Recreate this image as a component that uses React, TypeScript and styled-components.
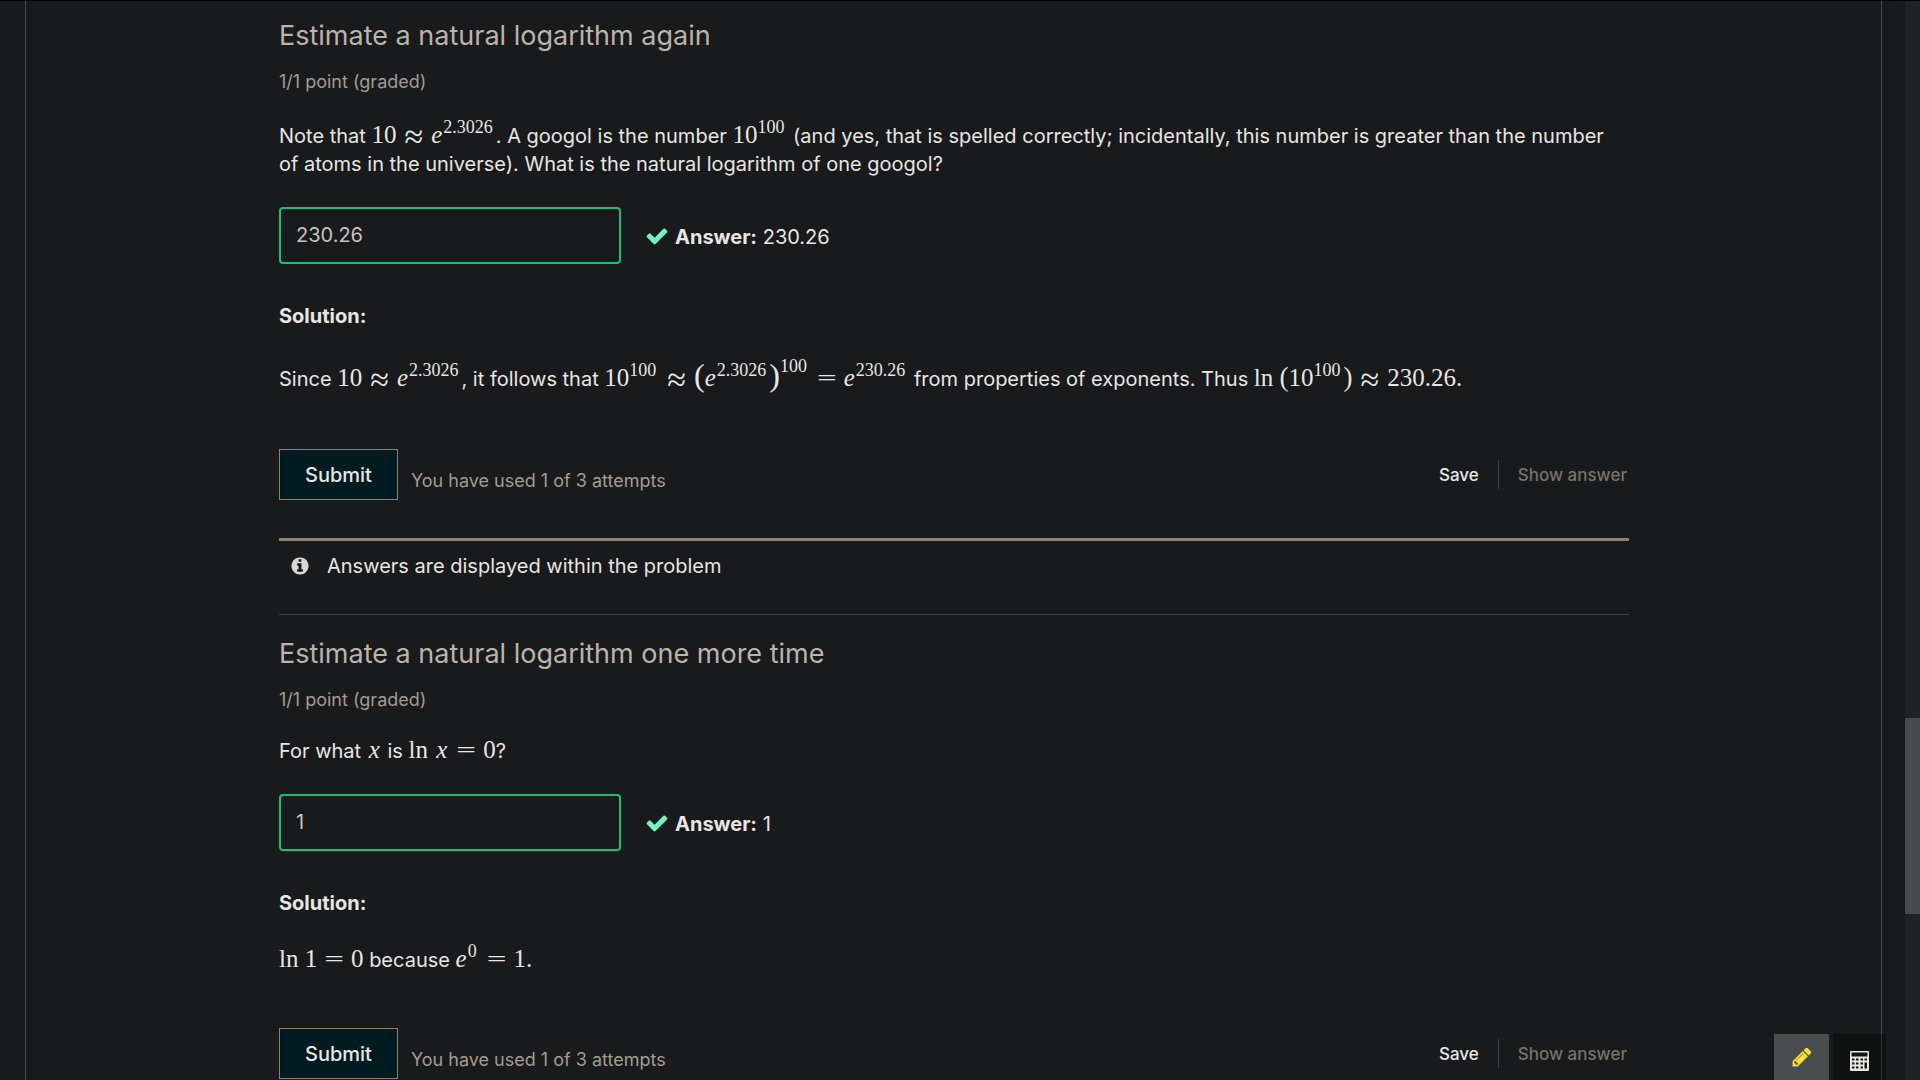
import React, { useState } from 'react';
import styled, { createGlobalStyle } from 'styled-components';

const color = {
  page: '#181a1b',
  text: '#e8e6e3',
  heading: '#bab4ab',
  muted: '#a49c91',
  field: '#c8c3bc',
  line: '#3e4446',
  rule: '#8c8172',
};

const GlobalStyle = createGlobalStyle`
  * { box-sizing: border-box; }
  body {
    margin: 0;
    background: ${color.page};
    color: ${color.text};
    font: 400 20px/28px Inter, "Open Sans", sans-serif;
  }
  button, input { font-family: inherit; }
`;

const Viewport = styled.div`
  display: flex;
  height: 100vh;
  overflow: hidden;
  border-top: 1px solid #000;
`;

const Content = styled.main`
  flex: 1;
  min-width: 0;
  margin: 0 23px 0 25px;
  padding: 0 252px 0 253px;
  border: solid #4c4f50;
  border-width: 0 1px;
`;

const ScrollTrack = styled.div`
  display: flex;
  flex-direction: column;
  width: 15px;
  background: #1f2324;
`;

const ScrollGap = styled.div<{ $grow: number }>`
  flex: ${(p) => p.$grow} 0 0;
`;

const ScrollThumb = styled.div`
  flex: 196 0 0;
  background: #454a4d;
`;

const Problem = styled.section<{ $divided?: boolean }>`
  padding-top: ${(p) => (p.$divided ? '20px' : '16px')};
  ${(p) => p.$divided && `border-top: 1px solid ${color.line};`}
`;

const Title = styled.h3`
  margin: 0;
  color: ${color.heading};
  font-size: 27px;
  font-weight: 400;
  line-height: 38px;
`;

const Progress = styled.div`
  margin-top: 14px;
  color: ${color.muted};
  font-size: 18px;
  line-height: 26px;
`;

const Prompt = styled.p<{ $tall?: boolean }>`
  margin: ${(p) => (p.$tall ? '27px' : '24px')} 0 0;
  padding-right: 10px;
`;

const AnswerRow = styled.div`
  display: flex;
  align-items: center;
  margin-top: 29px;
`;

const Field = styled.input`
  width: 342px;
  height: 57px;
  padding: 0 15px 2px;
  border: 2px solid #15c177;
  border-radius: 4px;
  background: ${color.page};
  color: ${color.field};
  font-size: 20px;
  outline: none;
`;

const CheckIcon = styled.svg`
  width: 24px;
  height: 24px;
  margin: 0 6px 0 24px;
  fill: #71f4bc;
`;

const Answer = styled.span`
  padding-top: 3px;
`;

const SolutionLabel = styled.p`
  margin: 38px 0 0;
  font-weight: 700;
`;

const Explanation = styled.p<{ $tall?: boolean }>`
  margin: ${(p) => (p.$tall ? '35px 0 56px' : '29px 0 54px')};
`;

const Actions = styled.div`
  display: flex;
  align-items: center;
`;

const Submit = styled.button`
  height: 51px;
  padding: 0 25px;
  border: 1px solid ${color.rule};
  background: #001c20;
  color: ${color.text};
  font-size: 20px;
  font-weight: 500;
`;

const Attempts = styled.span`
  flex: 1;
  padding: 12px 0 0 13px;
  color: ${color.muted};
  font-size: 18px;
`;

const LinkButton = styled.button`
  padding: 0 2px;
  border: 0;
  background: transparent;
  color: ${color.text};
  font-size: 17px;
  font-weight: 500;
  line-height: 28px;
  &:disabled { color: #77736c; }
`;

const Separator = styled.span`
  width: 1px;
  height: 29px;
  margin: 0 17px;
  background: ${color.line};
`;

const Notification = styled.div`
  display: flex;
  align-items: center;
  gap: 17px;
  margin-top: 38px;
  padding: 11px 11px 34px;
  border-top: 3px solid ${color.rule};
`;

const InfoIcon = styled.svg`
  width: 20px;
  height: 20px;
  fill: #dcd9d4;
`;

const Math = styled.span`
  font: 25px/1px "Liberation Serif", serif;
  white-space: nowrap;
`;

const Var = styled.i<{ $wide?: boolean }>`
  padding: ${(p) => (p.$wide ? '0 2px' : '0 1px 0 0')};
`;

const Sup = styled.sup<{ $high?: boolean }>`
  position: relative;
  top: ${(p) => (p.$high ? '-14px' : '-10px')};
  font-size: 18px;
  line-height: 1px;
  vertical-align: baseline;
  padding-right: 3px;
`;

const Rel = styled.span`
  margin: 0 6px;
  font: 200 26px/1px "DejaVu Sans", sans-serif;
`;

const Approx = styled.span`
  margin: 0 8px;
  font-size: 34px;
  line-height: 1px;
  vertical-align: -5px;
`;

const Fence = styled.span<{ $big?: boolean }>`
  font-size: ${(p) => (p.$big ? '32px' : '27px')};
  line-height: 1px;
`;

const Tools = styled.div`
  position: fixed;
  right: 34px;
  bottom: 0;
  display: flex;
  gap: 4px;
`;

const Tool = styled.button<{ $active?: boolean }>`
  display: flex;
  align-items: center;
  justify-content: center;
  width: ${(p) => (p.$active ? '55px' : '53px')};
  height: 46px;
  padding: ${(p) => (p.$active ? '0' : '8px 0 0')};
  border: 0;
  background: ${(p) => (p.$active ? '#484d50' : 'rgba(0, 0, 0, 0.3)')};
`;

const CheckMark = () => (
  <CheckIcon viewBox="0 0 1792 1792" role="img" aria-label="correct">
    <path d="M1671 566q0 40-28 68l-724 724-136 136q-28 28-68 28t-68-28l-136-136-362-362q-28-28-28-68t28-68l136-136q28-28 68-28t68 28l294 295 656-657q28-28 68-28t68 28l136 136q28 28 28 68z" />
  </CheckIcon>
);

type ProblemProps = {
  id: string;
  title: string;
  answer: string;
  prompt: React.ReactNode;
  explanation: React.ReactNode;
  divided?: boolean;
  tall?: boolean;
};

function ProblemBlock({ id, title, answer, prompt, explanation, divided, tall }: ProblemProps) {
  const [value, setValue] = useState(answer);
  return (
    <Problem $divided={divided}>
      <Title>{title}</Title>
      <Progress>1/1 point (graded)</Progress>
      <Prompt id={`${id}-prompt`} $tall={tall}>{prompt}</Prompt>
      <AnswerRow>
        <Field
          type="text"
          aria-labelledby={`${id}-prompt`}
          value={value}
          onChange={(e) => setValue(e.target.value)}
        />
        <CheckMark />
        <Answer>
          <b>Answer:</b> {answer}
        </Answer>
      </AnswerRow>
      <SolutionLabel>Solution:</SolutionLabel>
      <Explanation $tall={tall}>{explanation}</Explanation>
      <Actions>
        <Submit type="button">Submit</Submit>
        <Attempts>You have used 1 of 3 attempts</Attempts>
        <LinkButton type="button">Save</LinkButton>
        <Separator />
        <LinkButton type="button" disabled>
          Show answer
        </LinkButton>
      </Actions>
    </Problem>
  );
}

export default function App() {
  return (
    <>
      <GlobalStyle />
      <Viewport>
        <Content>
          <ProblemBlock
            id="googol"
            title="Estimate a natural logarithm again"
            answer="230.26"
            tall
            prompt={
              <>
                Note that{' '}
                <Math>10<Approx>≈</Approx><Var>e</Var><Sup>2.3026</Sup></Math>
                . A googol is the number <Math>10<Sup>100</Sup></Math> (and yes, that is spelled
                correctly; incidentally, this number is greater than the number of atoms in the
                universe). What is the natural logarithm of one googol?
              </>
            }
            explanation={
              <>
                Since <Math>10<Approx>≈</Approx><Var>e</Var><Sup>2.3026</Sup></Math>, it follows that{' '}
                <Math>
                  10<Sup>100</Sup><Approx>≈</Approx><Fence $big>(</Fence><Var>e</Var><Sup>2.3026</Sup>
                  <Fence $big>)</Fence><Sup $high>100</Sup><Rel>=</Rel><Var>e</Var><Sup>230.26</Sup>
                </Math>{' '}
                from properties of exponents. Thus{' '}
                <Math>
                  ln <Fence>(</Fence>10<Sup>100</Sup><Fence>)</Fence><Approx>≈</Approx>230.26.
                </Math>
              </>
            }
          />
          <Notification>
            <InfoIcon viewBox="0 0 1792 1792" aria-hidden="true">
              <path d="M1152 1376v-160q0-14-9-23t-23-9h-96v-512q0-14-9-23t-23-9h-320q-14 0-23 9t-9 23v160q0 14 9 23t23 9h96v320h-96q-14 0-23 9t-9 23v160q0 14 9 23t23 9h448q14 0 23-9t9-23zm-128-896v-160q0-14-9-23t-23-9h-192q-14 0-23 9t-9 23v160q0 14 9 23t23 9h192q14 0 23-9t9-23zm640 416q0 209-103 385.5t-279.5 279.5-385.5 103-385.5-103-279.5-279.5-103-385.5 103-385.5 279.5-279.5 385.5-103 385.5 103 279.5 279.5 103 385.5z" />
            </InfoIcon>
            Answers are displayed within the problem
          </Notification>
          <ProblemBlock
            id="zero"
            divided
            title="Estimate a natural logarithm one more time"
            answer="1"
            prompt={
              <>
                For what <Math><Var $wide>x</Var></Math> is{' '}
                <Math>ln <Var $wide>x</Var><Rel>=</Rel>0</Math>?
              </>
            }
            explanation={
              <>
                <Math>ln 1<Rel>=</Rel>0</Math> because{' '}
                <Math><Var>e</Var><Sup>0</Sup><Rel>=</Rel>1.</Math>
              </>
            }
          />
        </Content>
        <ScrollTrack aria-hidden="true">
          <ScrollGap $grow={717} />
          <ScrollThumb />
          <ScrollGap $grow={166} />
        </ScrollTrack>
      </Viewport>
      <Tools>
        <Tool type="button" $active aria-label="Notes">
          <svg width="22" height="22" viewBox="0 0 1792 1792" fill="#ffe02e" aria-hidden="true">
            <path d="M491 1536l91-91-235-235-91 91v107h128v128h107zm523-928q0-22-22-22-10 0-17 7l-542 542q-7 7-7 17 0 22 22 22 10 0 17-7l542-542q7-7 7-17zm-54-192l416 416-832 832h-416v-416zm683 96q0 53-37 90l-166 166-416-416 166-165q36-38 90-38 53 0 91 38l235 234q37 39 37 91z" />
          </svg>
        </Tool>
        <Tool type="button" aria-label="Calculator">
          <svg width="19" height="20" viewBox="0 0 19 20" aria-hidden="true">
            <rect width="19" height="20" rx="1" fill="#e8e6e3" />
            <path
              fill="#121415"
              d="M1.5 1.5h16v4h-16zM2 7.5h2.5v2H2zM6 7.5h2.5v2H6zM10.5 7.5h2.5v2h-2.5zM14.5 7.5h2.5v2h-2.5zM2 11.5h2.5v2H2zM6 11.5h2.5v2H6zM10.5 11.5h2.5v2h-2.5zM2 15.5h2.5v2H2zM6 15.5h2.5v2H6zM10.5 15.5h2.5v2h-2.5zM14.5 11.5h2.5v6h-2.5z"
            />
          </svg>
        </Tool>
      </Tools>
    </>
  );
}
